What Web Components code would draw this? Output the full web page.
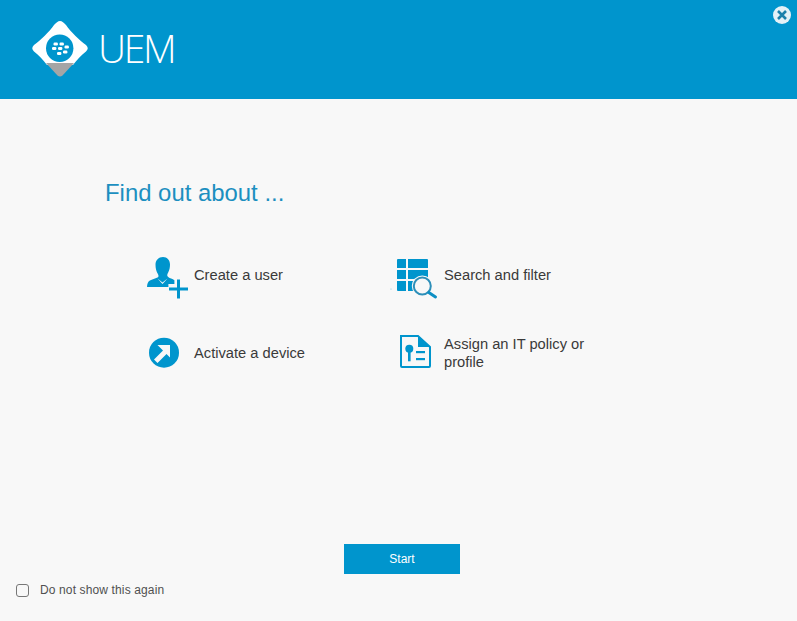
<!DOCTYPE html>
<html lang="en">
<head>
<meta charset="utf-8">
<title>UEM</title>
<style>
  html, body { margin: 0; height: 100%; background: #f8f8f8; }
</style>
</head>
<body>
<uem-welcome></uem-welcome>

<script>
// every tile icon is drawn on the same 48x44 box, so the strokes can be placed directly
const icons = {
  user: `<path d="M17 4c4.300 0 7 3.300 7 7.500 0 3-.6 5.700-1.700 7.800-.8 1.400-1.200 2.500-1 3.400.3 1.300 1.700 2 3.800 2.800 1.300.5 2.400 1 3.300 1.700V31h-6v3H1c.2-3.200.9-5.300 2.900-6.400 2.200-1.200 5.300-1.900 7.500-3 1-.5 1.200-1.300 1-2.400-.2-.9-.7-1.600-1.200-2.500-1.100-2.100-1.700-4.900-1.700-8.200C9.500 7.300 12.600 4 17 4z" fill="#0095cd"/>
    <path d="M11.500 25.500 16.500 29.500 21.500 25.500 16.500 31z" fill="#f8f8f8"/>
    <rect x="31" y="26.500" width="3" height="19" fill="#0095cd"/>
    <rect x="23" y="34.500" width="19" height="3" fill="#0095cd"/>`,
  search: `<circle cx="1" cy="36" r=".6" fill="#7fc6e2"/>
    <path d="M8 6h8v9H7V7a1 1 0 0 1 1-1zM18 6h19a1 1 0 0 1 1 1v8H18zM7 17h9v9H7zM18 17h20v9H18zM7 28h9v10H8a1 1 0 0 1-1-1zM18 28h20v10H18z" fill="#0095cd"/>
    <circle cx="32.300" cy="33" r="10.500" fill="#f8f8f8"/>
    <circle cx="32.300" cy="33" r="8.500" fill="#f8f8f8" stroke="#2d8fb9" stroke-width="2"/>
    <path d="M38.800 39.500 45.500 44" stroke="#0d8fc4" stroke-width="3" stroke-linecap="round"/>`,
  arrow: `<circle cx="18" cy="21.700" r="15" fill="#0095cd"/>
    <path d="M11.500 14H24V26.500L20.500 23 11.500 32 8 28.500 17 19.500z" fill="#f8f8f8"/>`,
  policy: `<path d="M11 5H28L40 16V35a1 1 0 0 1-1 1H12a1 1 0 0 1-1-1z" fill="#f8f8f8" stroke="#0095cd" stroke-width="2"/>
    <path d="M28 5V16H40z" fill="#0095cd"/>
    <circle cx="19.300" cy="17.700" r="4" fill="#0095cd"/>
    <rect x="18" y="18" width="2.600" height="12.300" fill="#0095cd"/>
    <rect x="26" y="20" width="9" height="2.200" fill="#0095cd"/>
    <rect x="26" y="27" width="9" height="2.200" fill="#0095cd"/>`
};

class UemLogo extends HTMLElement {
  constructor() {
    super();
    this.attachShadow({ mode: 'open' });
    this.shadowRoot.innerHTML = `
      <style>
        :host { display: flex; align-items: center; gap: 9px; color: #fff; }
        svg { display: block; flex: none; }
        span {
          font: 300 39px/1 "Open Sans", sans-serif;
          letter-spacing: -2.300px;
          padding-bottom: 3px;
        }
      </style>
      <svg width="58" height="58" viewBox="0 0 58 58">
        <path fill="#fff" d="M29 1C31 1 33 3 35 5C40 12 48 20 55 25Q58.500 28.300 55 31.500C50 35 46 40 42 45H16C12 40 8 35 3 31.500Q-.5 28.300 3 25C10 20 18 12 23 5C25 3 27 1 29 1z"/>
        <path fill="#a5a5a5" d="M15 43H43L31.500 55.500Q29 57.500 26.500 55.500z"/>
        <circle cx="28.700" cy="28.300" r="13.700" fill="#0095cd"/>
        <g fill="#fff">
          <rect x="22.500" y="22.500" width="4.400" height="3" rx="1.200"/>
          <rect x="28.500" y="22.500" width="4.400" height="3" rx="1.200"/>
          <rect x="21" y="27" width="4.400" height="3" rx="1.200"/>
          <rect x="27" y="27" width="4.400" height="3" rx="1.200"/>
          <rect x="33.500" y="25.500" width="4.400" height="3" rx="1.200"/>
          <rect x="26" y="32" width="4.400" height="3" rx="1.200"/>
          <rect x="32" y="30.500" width="4.400" height="3" rx="1.200"/>
        </g>
      </svg>
      <span><slot></slot></span>`;
  }
}
customElements.define('uem-logo', UemLogo);

class UemTile extends HTMLElement {
  constructor() {
    super();
    this.attachShadow({ mode: 'open' });
    this.shadowRoot.innerHTML = `
      <style>
        :host {
          display: grid;
          grid-template-columns: 48px 1fr;
          align-items: center;
          height: 44px;
          font: 14.700px/18px "Liberation Sans", Arial, sans-serif;
          color: #3a3a3a;
        }
        :host(.wide) { grid-template-columns: 54px 1fr; }
        svg { display: block; overflow: visible; }
      </style>
      <svg width="48" height="44" viewBox="0 0 48 44" fill="none">${icons[this.getAttribute('icon')] || ''}</svg>
      <div><slot></slot></div>`;
  }
}
customElements.define('uem-tile', UemTile);

class UemWelcome extends HTMLElement {
  constructor() {
    super();
    this.attachShadow({ mode: 'open' });
    this.shadowRoot.innerHTML = `
      <style>
        :host {
          display: flex;
          flex-direction: column;
          height: 621px;
          background: #f8f8f8;
          font-family: "Liberation Sans", Arial, sans-serif;
          position: relative;
          overflow: hidden;
        }
        header {
          height: 99px;
          flex: none;
          background: #0095cd;
          box-sizing: border-box;
          padding: 20px 0 0 31px;
        }
        .close {
          position: absolute;
          top: 6px;
          right: 6px;
          width: 18px;
          height: 18px;
          padding: 0;
          border: 0;
          background: none;
        }
        main { flex: 1; padding: 79px 0 0 105px; }
        h1 {
          margin: 0;
          font: 400 23.900px/30px "Liberation Sans", Arial, sans-serif;
          color: #1c8fc0;
        }
        .grid {
          display: grid;
          grid-template-columns: 244px 220px;
          grid-auto-rows: 44px;
          row-gap: 34px;
          margin: 45px 0 0 41px;
        }
        footer {
          flex: none;
          height: 77px;
          display: flex;
          flex-direction: column;
        }
        .start {
          align-self: flex-start;
          margin-left: 344px;
          width: 116px;
          height: 30px;
          border: 0;
          padding: 0;
          background: #0095cd;
          color: #fff;
          font: 12px "Liberation Sans", Arial, sans-serif;
        }
        label {
          display: flex;
          align-items: center;
          gap: 11px;
          margin: 9px 0 0 16px;
          font-size: 12px;
          letter-spacing: .13px;
          line-height: 14px;
          color: #505050;
        }
        .box {
          width: 11px;
          height: 11px;
          border: 1px solid #777;
          border-radius: 3px;
          background: #f8f8f8;
        }
      </style>
      <header><uem-logo>UEM</uem-logo></header>
      <button class="close" aria-label="Close">
        <svg width="18" height="18" viewBox="0 0 18 18">
          <circle cx="9" cy="9" r="9" fill="#e4f1f7"/>
          <path d="M5 5l8 8M13 5l-8 8" stroke="#1c80ab" stroke-width="2.600"/>
        </svg>
      </button>
      <main>
        <h1>Find out about ...</h1>
        <div class="grid">
          <uem-tile icon="user">Create a user</uem-tile>
          <uem-tile icon="search" class="wide">Search and filter</uem-tile>
          <uem-tile icon="arrow">Activate a device</uem-tile>
          <uem-tile icon="policy" class="wide">Assign an IT policy or<br>profile</uem-tile>
        </div>
      </main>
      <footer>
        <button class="start">Start</button>
        <label><span class="box"></span>Do not show this again</label>
      </footer>`;
  }
}
customElements.define('uem-welcome', UemWelcome);
</script>
</body>
</html>
